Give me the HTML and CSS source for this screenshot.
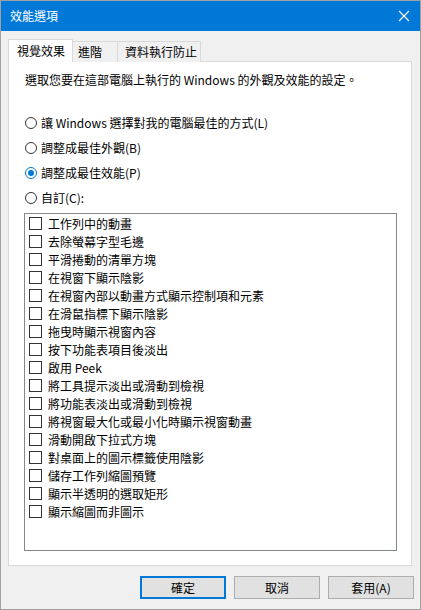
FILE: index.html
```html
<!DOCTYPE html>
<html lang="zh-Hant">
<head>
    <meta charset="UTF-8">
    <title>效能選項</title>
    <link rel="stylesheet" href="styles.css">
</head>
<body>

<div class="window">
    <div class="titlebar">
        <span class="title">效能選項</span>
        <svg class="close" width="12" height="12" viewBox="0 0 12 12">
            <path d="M1 1 L11 11 M11 1 L1 11" stroke="#fff" stroke-width="1.1" fill="none"/>
        </svg>
    </div>

    <div class="content">
        <div class="tabs">
            <div class="tab tab-active">視覺效果</div>
            <div class="tab tab-advanced">進階</div>
            <div class="tab tab-dep">資料執行防止</div>
        </div>

        <div class="panel">
            <p class="intro">選取您要在這部電腦上執行的 Windows 的外觀及效能的設定。</p>

            <div class="options">
                <div class="radio"><span class="radio-dot"></span>讓 Windows 選擇對我的電腦最佳的方式(L)</div>
                <div class="radio"><span class="radio-dot"></span>調整成最佳外觀(B)</div>
                <div class="radio"><span class="radio-dot checked"></span>調整成最佳效能(P)</div>
                <div class="radio"><span class="radio-dot"></span>自訂(C):</div>
            </div>

            <!-- visual effects list -->
            <ul class="effects">
                <li><span class="check"></span>工作列中的動畫</li>
                <li><span class="check"></span>去除螢幕字型毛邊</li>
                <li><span class="check"></span>平滑捲動的清單方塊</li>
                <li><span class="check"></span>在視窗下顯示陰影</li>
                <li><span class="check"></span>在視窗內部以動畫方式顯示控制項和元素</li>
                <li><span class="check"></span>在滑鼠指標下顯示陰影</li>
                <li><span class="check"></span>拖曳時顯示視窗內容</li>
                <li><span class="check"></span>按下功能表項目後淡出</li>
                <li><span class="check"></span>啟用 Peek</li>
                <li><span class="check"></span>將工具提示淡出或滑動到檢視</li>
                <li><span class="check"></span>將功能表淡出或滑動到檢視</li>
                <li><span class="check"></span>將視窗最大化或最小化時顯示視窗動畫</li>
                <li><span class="check"></span>滑動開啟下拉式方塊</li>
                <li><span class="check"></span>對桌面上的圖示標籤使用陰影</li>
                <li><span class="check"></span>儲存工作列縮圖預覽</li>
                <li><span class="check"></span>顯示半透明的選取矩形</li>
                <li><span class="check"></span>顯示縮圖而非圖示</li>
            </ul>
        </div>

        <div class="buttons">
            <button class="btn btn-default">確定</button>
            <button class="btn">取消</button>
            <button class="btn">套用(A)</button>
        </div>
    </div>
</div>

</body>
</html>
```

FILE: styles.css
```css
body {
    margin: 0;
    padding: 0;
    font-family: "Noto Sans CJK TC", sans-serif;
    font-size: 12px;
    color: #000;
    background-color: #f0f0f0;
}

.window {
    width: 421px;
    height: 610px;
    box-sizing: border-box;
    border: 1px solid #a0a0a0;
    background-color: #f0f0f0;
}

.titlebar {
    height: 30px;
    background-color: #0078d7;
    color: white;
    display: flex;
    align-items: center;
    justify-content: space-between;
    padding: 0 9px 0 9px;
}

.title {
    font-size: 12px;
    line-height: 30px;
}

.close {
    display: block;
    margin-right: 1px;
}

.content {
    padding: 8px 8px 0 7px;
}

/* tab strip */
.tabs {
    display: flex;
    align-items: flex-end;
    height: 23px;
    margin-bottom: -1px;
}

.tab {
    box-sizing: border-box;
    height: 21px;
    line-height: 20px;
    border: 1px solid #d9d9d9;
    border-bottom: none;
    background-color: #f0f0f0;
    padding-left: 5px;
    margin-left: -1px;
}

.tab-active {
    position: relative;
    z-index: 1;
    height: 23px;
    line-height: 21px;
    width: 65px;
    margin-left: 0;
    padding-left: 8px;
    background-color: white;
}

.tab-advanced {
    width: 46px;
}

.tab-dep {
    width: 84px;
    padding-left: 7px;
}

.panel {
    background-color: white;
    border: 1px solid #d9d9d9;
    padding: 9px 14px 14px 15px;
}

.intro {
    margin: 0 0 21px 1px;
    line-height: 18px;
}

.radio {
    display: flex;
    align-items: center;
    height: 25px;
}

.radio-dot {
    box-sizing: border-box;
    width: 12px;
    height: 12px;
    margin: 0 4px 0 1px;
    border: 1px solid #333;
    border-radius: 50%;
    display: flex;
    align-items: center;
    justify-content: center;
}

.radio-dot.checked {
    border-color: #0078d7;
}

.radio-dot.checked::after {
    content: "";
    width: 6px;
    height: 6px;
    border-radius: 50%;
    background-color: #0078d7;
}

.effects {
    list-style-type: none;
    margin: 3px 0 0 0;
    padding: 0 0 0 4px;
    height: 338px;
    box-sizing: border-box;
    border: 1px solid #828790;
}

.effects li {
    display: flex;
    align-items: center;
    height: 18px;
}

.check {
    box-sizing: border-box;
    width: 13px;
    height: 13px;
    border: 1px solid #333;
    margin-right: 6px;
}

.buttons {
    display: flex;
    justify-content: flex-end;
    gap: 8px;
    margin: 10px -2px 0 0;
}

.btn {
    box-sizing: border-box;
    width: 86px;
    height: 23px;
    padding: 0;
    font-family: inherit;
    font-size: 12px;
    color: #000;
    background-color: #e1e1e1;
    border: 1px solid #adadad;
}

.btn-default {
    border: 2px solid #0078d7;
}
```
